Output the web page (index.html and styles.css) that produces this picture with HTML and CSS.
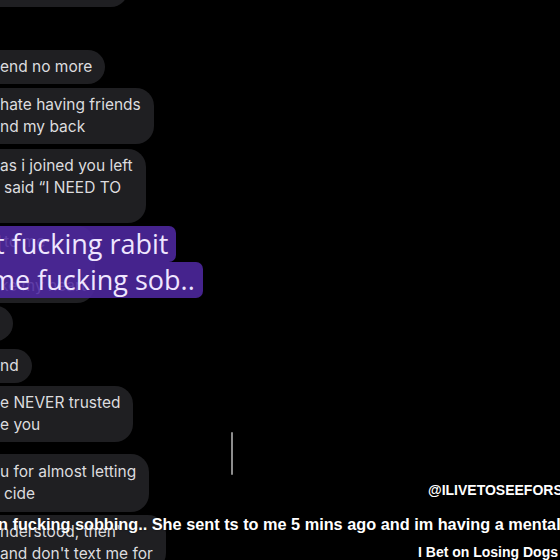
FILE: index.html
```html
<!DOCTYPE html>
<html>
<head>
<meta charset="utf-8">
<link rel="stylesheet" href="styles.css">
</head>
<body>
<div class="screen">
  <div class="chat">
    <div class="bubble top-b"><span class="ln">&nbsp;</span></div>
    <div class="bubble g43"><span class="ln">end no more</span></div>
    <div class="bubble g4"><span class="ln">hate having friends</span><span class="ln">nd my back</span></div>
    <div class="bubble g5 pb2"><span class="ln">as i joined you left</span><span class="ln in4">said “I NEED TO</span><span class="ln">&nbsp;</span></div>
    <div class="bubble g3 w95"><span class="ln in4">to me</span><span class="ln">&nbsp;</span><span class="ln">ke my heart</span></div>
    <div class="bubble g3 stub"><span class="ln">&nbsp;</span></div>
    <div class="bubble g8"><span class="ln">nd</span></div>
    <div class="bubble g3"><span class="ln">e NEVER trusted</span><span class="ln">e you</span></div>
    <div class="bubble g12 p7"><span class="ln">u for almost letting</span><span class="ln in4">cide</span></div>
    <div class="bubble g3"><span class="ln">nderstood, then'</span><span class="ln">and don't text me for</span></div>
  </div>

  <div class="sticker">
    <div class="sline s1">t fucking rabit</div>
    <div class="sline s2">me fucking sob..</div>
  </div>

  <div class="cursor"></div>

  <div class="handle">@ILIVETOSEEFORS</div>
  <div class="caption">n fucking sobbing.. She sent ts to me 5 mins ago and im having a mental</div>
  <div class="sound">I Bet on Losing Dogs</div>
</div>
</body>
</html>
```
FILE: styles.css
```css
* { box-sizing: border-box; }
html, body {
  margin: 0;
  padding: 0;
  background: #000;
}
.screen {
  position: relative;
  width: 560px;
  height: 560px;
  overflow: hidden;
  background: #000;
}
.chat {
  display: flex;
  flex-direction: column;
  align-items: flex-start;
  margin-top: -27px;
  margin-left: -30px;
}
.bubble {
  display: flex;
  flex-direction: column;
  background: #1f1f22;
  border-radius: 18px;
  padding: 6px 13px 6px 30px;
  font-family: Inter, "Liberation Sans", Arial, sans-serif;
  font-size: 15.5px;
  line-height: 22px;
  color: #dcdcdf;
}
.ln { display: block; white-space: nowrap; }
.in4 { padding-left: 4px; }
.top-b { width: 158px; }
.g43 { margin-top: 43px; }
.g12 { margin-top: 12px; }
.g8 { margin-top: 8px; }
.g5 { margin-top: 5px; }
.g4 { margin-top: 4px; }
.g3 { margin-top: 3px; }
.pb2 { padding-bottom: 2px; }
.p7 { padding-top: 7px; padding-bottom: 7px; }
.w95 { width: 125px; padding-top: 5px; }
.stub { width: 38px; padding-top: 6px; padding-bottom: 7px; }

.sticker {
  position: absolute;
  left: 0;
  top: 226px;
  display: flex;
  flex-direction: column;
  align-items: flex-start;
}
.sline {
  background: rgba(78, 40, 160, 0.88);
  color: #efe6ff;
  font-family: "Open Sans", sans-serif;
  font-size: 27px;
  line-height: 36px;
  height: 36px;
  white-space: nowrap;
  border-radius: 0 7px 7px 0;
  padding-right: 8px;
}
.s1 { margin-left: -5px; }
.s2 { margin-left: -10px; }

.cursor {
  position: absolute;
  left: 231px;
  top: 432px;
  width: 2px;
  height: 43px;
  background: #8d8d8d;
  border-radius: 1px;
}
.handle {
  position: absolute;
  left: 428px;
  top: 481px;
  font-family: "Liberation Sans", Arial, sans-serif;
  font-weight: 700;
  font-size: 14px;
  line-height: 18px;
  color: #fff;
  white-space: nowrap;
}
.caption {
  position: absolute;
  left: -2px;
  top: 513px;
  font-family: "Liberation Sans", Arial, sans-serif;
  font-weight: 700;
  font-size: 16.3px;
  line-height: 22px;
  color: #fff;
  white-space: nowrap;
  text-shadow: 0 0 2px rgba(0,0,0,0.6);
}
.sound {
  position: absolute;
  left: 418px;
  top: 543px;
  font-family: "Liberation Sans", Arial, sans-serif;
  font-weight: 700;
  font-size: 14px;
  line-height: 18px;
  color: #fff;
  white-space: nowrap;
}
```
